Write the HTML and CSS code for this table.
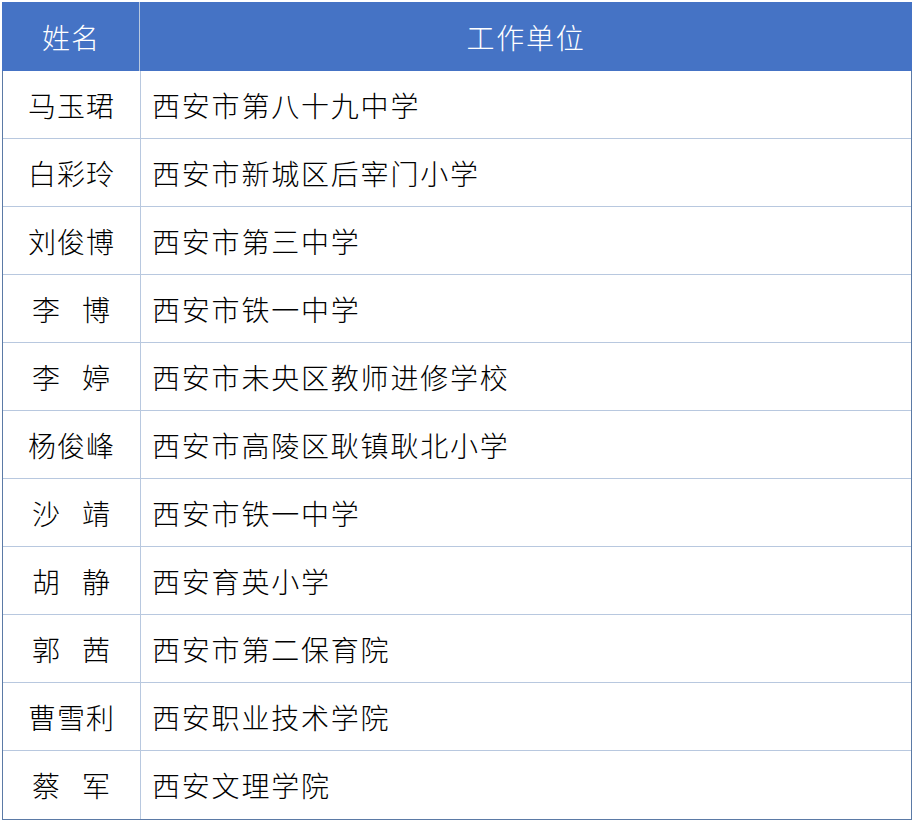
FILE: index.html
```html
<!DOCTYPE html>
<html lang="zh-CN">
<head>
<meta charset="utf-8">
<link rel="stylesheet" href="styles.css">
</head>
<body>
<div class="table">
  <div class="row head">
    <div class="name">姓名</div>
    <div class="unit center">工作单位</div>
  </div>
  <div class="row"><div class="name">马玉珺</div><div class="unit">西安市第八十九中学</div></div>
  <div class="row"><div class="name">白彩玲</div><div class="unit">西安市新城区后宰门小学</div></div>
  <div class="row"><div class="name">刘俊博</div><div class="unit">西安市第三中学</div></div>
  <div class="row"><div class="name">李 博</div><div class="unit">西安市铁一中学</div></div>
  <div class="row"><div class="name">李 婷</div><div class="unit">西安市未央区教师进修学校</div></div>
  <div class="row"><div class="name">杨俊峰</div><div class="unit">西安市高陵区耿镇耿北小学</div></div>
  <div class="row"><div class="name">沙 靖</div><div class="unit">西安市铁一中学</div></div>
  <div class="row"><div class="name">胡 静</div><div class="unit">西安育英小学</div></div>
  <div class="row"><div class="name">郭 茜</div><div class="unit">西安市第二保育院</div></div>
  <div class="row"><div class="name">曹雪利</div><div class="unit">西安职业技术学院</div></div>
  <div class="row"><div class="name">蔡 军</div><div class="unit">西安文理学院</div></div>
</div>
</body>
</html>
```
FILE: styles.css
```css
html, body {
  margin: 0;
  padding: 0;
  background: #ffffff;
}
body {
  padding: 2px 0 0 2px;
  font-family: "Noto Sans CJK SC", "Noto Sans", sans-serif;
  font-size: 28px;
  font-weight: 300;
  color: #000000;
}
.table {
  width: 910px;
  box-sizing: border-box;
  border-left: 1px solid #5b7aa6;
  border-right: 1px solid #5b7aa6;
  border-bottom: 1px solid #5b7aa6;
}
.row {
  display: grid;
  grid-template-columns: 138px 1fr;
  height: 68px;
  box-sizing: border-box;
  border-bottom: 1px solid #b8c8df;
}
.row:last-child {
  border-bottom: none;
}
.head {
  height: 69px;
  background: #4573c5;
  color: #ffffff;
  margin: 0 -1px;
  border-bottom: none;
}
.name {
  display: flex;
  align-items: center;
  justify-content: center;
  border-right: 1px solid #b8c8df;
  letter-spacing: 1px;
  word-spacing: 14px;
  white-space: pre;
}
.head .name {
  padding-left: 1px;
}
.unit {
  display: flex;
  align-items: center;
  padding-left: 11px;
  letter-spacing: 1.8px;
}
.unit.center {
  justify-content: center;
  padding-left: 0;
}
```
